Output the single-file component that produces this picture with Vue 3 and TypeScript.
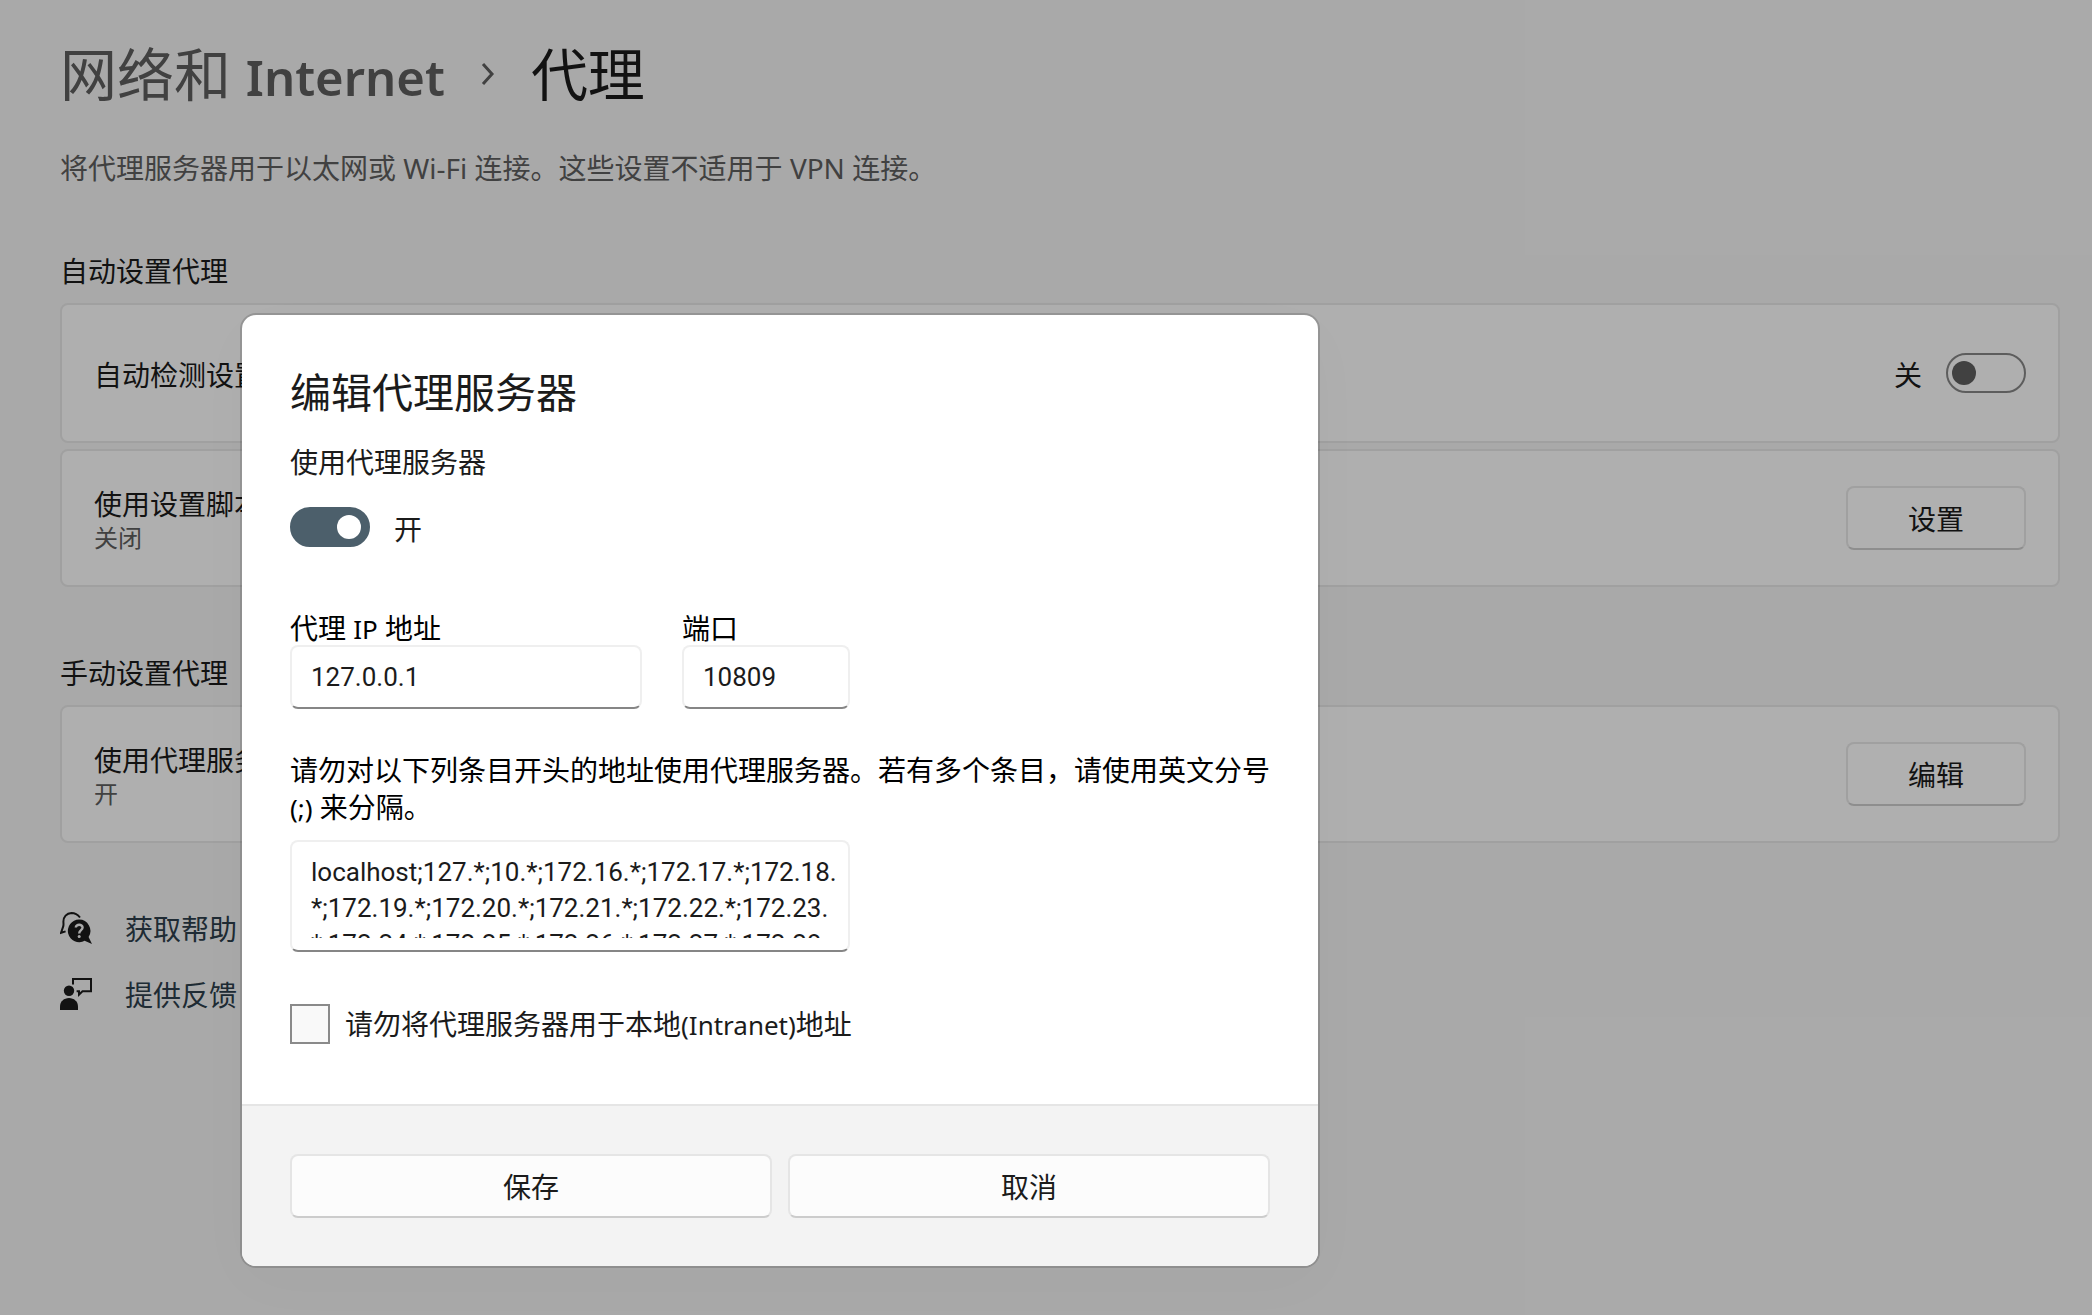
<script setup lang="ts">
import { ref } from 'vue'

const autoDetect = ref(false)
const useProxy = ref(true)
const address = ref('127.0.0.1')
const port = ref('10809')
const bypassLocal = ref(false)
const exceptions = ref(
  'localhost;127.*;10.*;172.16.*;172.17.*;172.18.*;172.19.*;172.20.*;172.21.*;172.22.*;172.23.*;172.24.*;172.25.*;172.26.*;172.27.*;172.28.*;172.29.*;172.30.*;172.31.*;192.168.*',
)
</script>

<template>
  <div class="screen">
    <main class="page">
      <h1 class="crumbs">
        <a class="crumb" href="#">网络和 <span class="crumb-latin">Internet</span></a>
        <svg class="chevron" viewBox="0 0 14 24" aria-hidden="true">
          <path d="M2 2 L11 12 L2 22" />
        </svg>
        <span>代理</span>
      </h1>
      <p class="intro">将代理服务器用于以太网或 Wi-Fi 连接。这些设置不适用于 VPN 连接。</p>

      <section class="group">
        <h2 class="group-title">自动设置代理</h2>
        <div class="card card-tall">
          <div class="card-text">
            <label class="card-title" for="auto-detect">自动检测设置</label>
          </div>
          <div class="card-control">
            <span>关</span>
            <input id="auto-detect" v-model="autoDetect" class="toggle" type="checkbox" role="switch" />
          </div>
        </div>
        <div class="card">
          <div class="card-text">
            <span class="card-title">使用设置脚本</span>
            <span class="card-state">关闭</span>
          </div>
          <button class="button card-button" type="button">设置</button>
        </div>
      </section>

      <section class="group">
        <h2 class="group-title">手动设置代理</h2>
        <div class="card">
          <div class="card-text">
            <span class="card-title">使用代理服务器</span>
            <span class="card-state">开</span>
          </div>
          <button class="button card-button" type="button">编辑</button>
        </div>
      </section>

      <nav class="links">
        <a class="link" href="#">
          <svg class="link-icon" viewBox="0 0 32 32" aria-hidden="true">
            <path class="line" d="M20 5.5 C17.5 2.3 14.5 1 11.5 1 C6.5 1.2 3.4 5 3.4 9.5 C3.4 11 3.7 12.6 3.3 14.2 L1 20.8 L5.6 19.4" />
            <path class="solid" d="M19 7.6 A11.3 11.3 0 1 0 24.6 28.8 L32 32 L28.6 25 A11.3 11.3 0 0 0 19 7.6 Z" />
            <path class="mark" d="M15.8 15.6 C15.8 11.8 22.6 11.8 22.6 15.6 C22.6 18.2 19.2 18.2 19.2 21.4" />
            <circle class="dot" cx="19.2" cy="24.6" r="1.5" />
          </svg>
          <span class="link-text">获取帮助</span>
        </a>
        <a class="link" href="#">
          <svg class="link-icon" viewBox="0 0 32 32" aria-hidden="true">
            <circle class="solid" cx="9" cy="12.8" r="5.2" />
            <path class="solid" d="M0 32 V28.5 C0 23.5 4 20 9 20 C14 20 18 23.5 18 28.5 V32 Z" />
            <path class="line" d="M13 6.5 V1 H31 V13.2 H22.5 L19 16.6 V13.2 H16.6" />
          </svg>
          <span class="link-text">提供反馈</span>
        </a>
      </nav>
    </main>

    <div class="overlay">
      <form class="dialog" role="dialog" aria-labelledby="dialog-title" @submit.prevent>
        <div class="dialog-body">
          <h2 id="dialog-title" class="dialog-title">编辑代理服务器</h2>
          <label class="switch-label" for="use-proxy">使用代理服务器</label>
          <div class="switch-row">
            <input id="use-proxy" v-model="useProxy" class="toggle" type="checkbox" role="switch" />
            <span>开</span>
          </div>

          <div class="fields">
            <div class="field field-address">
              <label for="address">代理 <span class="latin">IP</span> 地址</label>
              <input id="address" v-model="address" class="box" type="text" />
            </div>
            <div class="field field-port">
              <label for="port">端口</label>
              <input id="port" v-model="port" class="box" type="text" />
            </div>
          </div>

          <label class="note" for="exceptions">请勿对以下列条目开头的地址使用代理服务器。若有多个条目，请使用英文分号 <span class="latin">(;)</span> 来分隔。</label>
          <div class="area">
            <textarea id="exceptions" v-model="exceptions" class="area-text" spellcheck="false"></textarea>
          </div>

          <div class="check-row">
            <input id="bypass-local" v-model="bypassLocal" class="check" type="checkbox" />
            <label for="bypass-local">请勿将代理服务器用于本地<span class="latin">(Intranet)</span>地址</label>
          </div>
        </div>
        <div class="dialog-footer">
          <button class="button" type="submit">保存</button>
          <button class="button" type="button">取消</button>
        </div>
      </form>
    </div>
  </div>
</template>

<style>
body {
  background: #f3f3f3;
}
</style>

<style scoped>
.screen {
  position: relative;
  min-height: 100vh;
  overflow: hidden;
  color: #1b1b1b;
  font-family: 'Noto Sans', 'Noto Sans CJK SC', sans-serif;
  font-size: 28px;
  line-height: 40px;
}
.screen * {
  box-sizing: border-box;
}
h1,
h2,
p {
  margin: 0;
  font-size: inherit;
  font-weight: 400;
}
a {
  color: inherit;
  text-decoration: none;
}
input,
textarea,
button {
  margin: 0;
  color: inherit;
  font: inherit;
}
.latin {
  font-size: 26px;
  line-height: 1;
}

.page {
  padding: 36px 32px 0 60px;
}
.crumbs {
  display: flex;
  align-items: center;
  font-size: 57px;
  line-height: 76px;
}
.crumb {
  color: #5d5d5d;
}
.crumb-latin {
  font-size: 49px;
  font-weight: 600;
  line-height: 1;
}
.chevron {
  width: 14px;
  height: 24px;
  margin: 0 36px;
  fill: none;
  stroke: #5d5d5d;
  stroke-width: 3;
}
.intro {
  margin-top: 37px;
  color: #5d5d5d;
  line-height: 38px;
}
.group {
  margin-top: 64px;
}
.group-title {
  margin-bottom: 12px;
  line-height: 40px;
}
.group + .group {
  margin-top: 66px;
}
.card {
  display: flex;
  align-items: center;
  justify-content: space-between;
  min-height: 138px;
  padding: 0 32px;
  border: 2px solid #e5e5e5;
  border-radius: 8px;
  background: #fbfbfb;
}
.card-tall {
  min-height: 140px;
}
.card + .card {
  margin-top: 6px;
}
.card-text {
  display: flex;
  flex-direction: column;
  padding-top: 4px;
}
.card-title {
  line-height: 36px;
}
.card-state {
  color: #5d5d5d;
  font-size: 24px;
  line-height: 32px;
}
.card-control,
.switch-row {
  display: flex;
  align-items: center;
  gap: 24px;
  height: 40px;
}
.card-control span,
.switch-row span {
  padding-top: 3px;
}
.card-button {
  width: 180px;
}
.button {
  height: 64px;
  padding: 2px 0 0;
  border: 2px solid #e5e5e5;
  border-bottom-color: #cccccc;
  border-radius: 8px;
  background: #fcfcfc;
}
.toggle {
  flex: none;
  display: flex;
  align-items: center;
  width: 80px;
  height: 40px;
  padding: 0 7px 0 4px;
  border: 2px solid #868686;
  border-radius: 20px;
  appearance: none;
}
.toggle::before {
  content: '';
  width: 24px;
  height: 24px;
  border-radius: 50%;
  background: #5d5d5d;
}
.toggle:checked {
  justify-content: flex-end;
  border-color: #4c5f6b;
  background: #4c5f6b;
}
.toggle:checked::before {
  background: #ffffff;
}
.links {
  display: flex;
  flex-direction: column;
  align-items: flex-start;
  gap: 24px;
  margin-top: 64px;
}
.link {
  display: flex;
  align-items: center;
  gap: 33px;
  color: #2d3e4b;
}
.link-text {
  padding-top: 2px;
}
.link-icon {
  width: 32px;
  height: 32px;
}
.solid {
  fill: #1b1b1b;
}
.line {
  fill: none;
  stroke: #1b1b1b;
  stroke-width: 2;
}
.mark {
  fill: none;
  stroke: #f3f3f3;
  stroke-width: 2.4;
}
.dot {
  fill: #f3f3f3;
}

.overlay {
  position: absolute;
  inset: 0;
  padding: 313px 32px 0 240px;
  background: rgba(0, 0, 0, 0.3);
}
.dialog {
  max-width: 1080px;
  border: 2px solid rgba(0, 0, 0, 0.15);
  border-radius: 16px;
  background: #ffffff;
  background-clip: padding-box;
  box-shadow: 0 16px 64px rgba(0, 0, 0, 0.02);
}
.dialog-body {
  padding: 47px 48px 60px;
}
.dialog-title {
  font-size: 41px;
  line-height: 60px;
}
.switch-label {
  display: block;
  margin-top: 20px;
}
.switch-row {
  margin-top: 25px;
}
.fields {
  display: flex;
  gap: 40px;
  margin-top: 64px;
}
.field {
  display: flex;
  flex-direction: column;
  color: #000000;
  line-height: 34px;
}
.field-address {
  width: 352px;
}
.field-port {
  width: 168px;
}
.box,
.area {
  border: 2px solid #efefef;
  border-bottom-color: #868686;
  border-radius: 8px;
  background: #ffffff;
  color: #1b1b1b;
}
.box {
  width: 100%;
  height: 64px;
  padding: 0 19px;
  font-family: Roboto, 'Noto Sans CJK SC', sans-serif;
  font-size: 26px;
}
.note {
  display: block;
  margin-top: 43px;
  color: #000000;
  line-height: 37px;
}
.area {
  width: 560px;
  height: 112px;
  margin-top: 14px;
  padding: 12px 8px 12px 19px;
}
.area-text {
  display: block;
  width: 100%;
  height: 84px;
  padding: 0;
  border: 0;
  background: transparent;
  font-family: Roboto, 'Noto Sans CJK SC', sans-serif;
  font-size: 26px;
  line-height: 36px;
  word-break: break-all;
  overflow: hidden;
  resize: none;
}
.check-row {
  display: flex;
  align-items: center;
  gap: 15px;
  margin-top: 52px;
}
.check {
  flex: none;
  width: 40px;
  height: 40px;
  border: 2px solid #8a8a8a;
  background: #f9f9f9;
  appearance: none;
}
.check:checked {
  background: #4c5f6b;
}
.dialog-footer {
  display: grid;
  grid-template-columns: 1fr 1fr;
  gap: 16px;
  padding: 48px;
  border-top: 2px solid #e5e5e5;
  border-radius: 0 0 14px 14px;
  background: #f3f3f3;
}
</style>
